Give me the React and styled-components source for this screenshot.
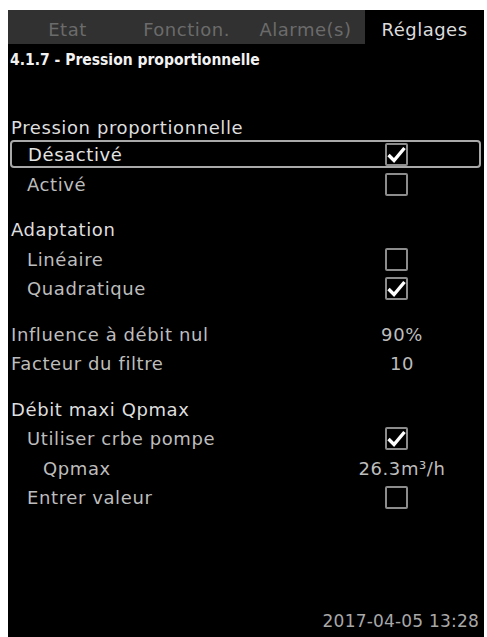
import styled, { createGlobalStyle } from 'styled-components';

const GlobalStyle = createGlobalStyle`
  html, body {
    margin: 0;
    padding: 0;
    background: #fff;
  }
  body {
    font-family: 'DejaVu Sans', 'Noto Sans', sans-serif;
  }
`;

const Screen = styled.div`
  margin: 10px 3px 0 8px;
  height: 627px;
  background: #000;
  display: flex;
  flex-direction: column;
  overflow: hidden;
`;

const TabBar = styled.div`
  display: grid;
  grid-template-columns: repeat(4, 1fr);
  height: 34px;
  background: #313131;
`;

const Tab = styled.div`
  display: flex;
  align-items: center;
  justify-content: center;
  padding-top: 5px;
  font-size: 18px;
  letter-spacing: 0.5px;
  color: ${(p) => (p.$active ? '#dcdcdc' : '#6b6b6b')};
  background: ${(p) => (p.$active ? '#000' : 'transparent')};
`;

const Title = styled.div`
  height: 32px;
  display: flex;
  align-items: center;
  padding-left: 2px;
  font-family: 'DejaVu Sans Condensed', 'DejaVu Sans', sans-serif;
  font-weight: bold;
  font-size: 15.5px;
  color: #f2f2f2;
`;

const List = styled.div`
  margin-top: 38px;
  display: flex;
  flex-direction: column;
`;

const Group = styled.div`
  display: flex;
  flex-direction: column;
  margin-top: ${(p) => (p.$first ? '0' : '16px')};
`;

const Row = styled.div`
  display: grid;
  grid-template-columns: 1fr 112px;
  align-items: center;
  height: ${(p) => (p.$compact ? '26px' : '29.5px')};
  padding-left: ${(p) => 3 + p.$level * 16}px;
  padding-right: 32px;
  font-size: 18px;
  letter-spacing: 0.6px;
  color: ${(p) => (p.$header ? '#dedede' : '#bdbdbd')};
  box-sizing: border-box;
`;

const Selected = styled(Row)`
  margin: 0 3px 1.5px 2px;
  height: 28px;
  border: 2px solid #a9a9a9;
  border-radius: 4px;
  padding-left: ${(p) => p.$level * 16}px;
  padding-right: 27px;
  color: #e4e4e4;
`;

const Cell = styled.div`
  display: flex;
  justify-content: center;
  padding-left: ${(p) => (p.$value ? '12px' : '0')};
  white-space: nowrap;
`;

const Box = styled.div`
  width: 23px;
  height: 23px;
  box-sizing: border-box;
  border: 2px solid #8c8c8c;
  border-radius: 2px;
  display: flex;
  align-items: center;
  justify-content: center;
`;

const DateLine = styled.div`
  margin-top: auto;
  padding: 0 5px 2px 0;
  text-align: right;
  font-size: 17px;
  letter-spacing: 0.2px;
  color: #a8a8a8;
  height: 24px;
`;

const Check = ({ on }) => (
  <Box>
    {on && (
      <svg width="19" height="17" viewBox="0 0 19 17">
        <path d="M1.5 9 L7 14.5 L17.5 2" fill="none" stroke="#fff" strokeWidth="3.4" strokeLinejoin="miter" />
      </svg>
    )}
  </Box>
);

const Item = ({ label, level = 1, check, value, selected }) => {
  const R = selected ? Selected : Row;
  return (
    <R $level={level}>
      <span>{label}</span>
      <Cell $value={value !== undefined}>
        {check !== undefined ? <Check on={check} /> : value}
      </Cell>
    </R>
  );
};

const Header = ({ children, compact }) => (
  <Row $level={0} $header $compact={compact}>
    <span>{children}</span>
  </Row>
);

export default function App() {
  return (
    <>
      <GlobalStyle />
      <Screen>
        <TabBar>
          <Tab>Etat</Tab>
          <Tab>Fonction.</Tab>
          <Tab>Alarme(s)</Tab>
          <Tab $active>Réglages</Tab>
        </TabBar>
        <Title>4.1.7 - Pression proportionnelle</Title>
        <List>
          <Group $first>
            <Header compact>Pression proportionnelle</Header>
            <Item label="Désactivé" check selected />
            <Item label="Activé" check={false} />
          </Group>
          <Group>
            <Header>Adaptation</Header>
            <Item label="Linéaire" check={false} />
            <Item label="Quadratique" check />
          </Group>
          <Group>
            <Item label="Influence à débit nul" level={0} value="90%" />
            <Item label="Facteur du filtre" level={0} value="10" />
          </Group>
          <Group>
            <Header>Débit maxi Qpmax</Header>
            <Item label="Utiliser crbe pompe" check />
            <Item label="Qpmax" level={2} value={<>26.3m³/h</>} />
            <Item label="Entrer valeur" check={false} />
          </Group>
        </List>
        <DateLine>2017-04-05 13:28</DateLine>
      </Screen>
    </>
  );
}
